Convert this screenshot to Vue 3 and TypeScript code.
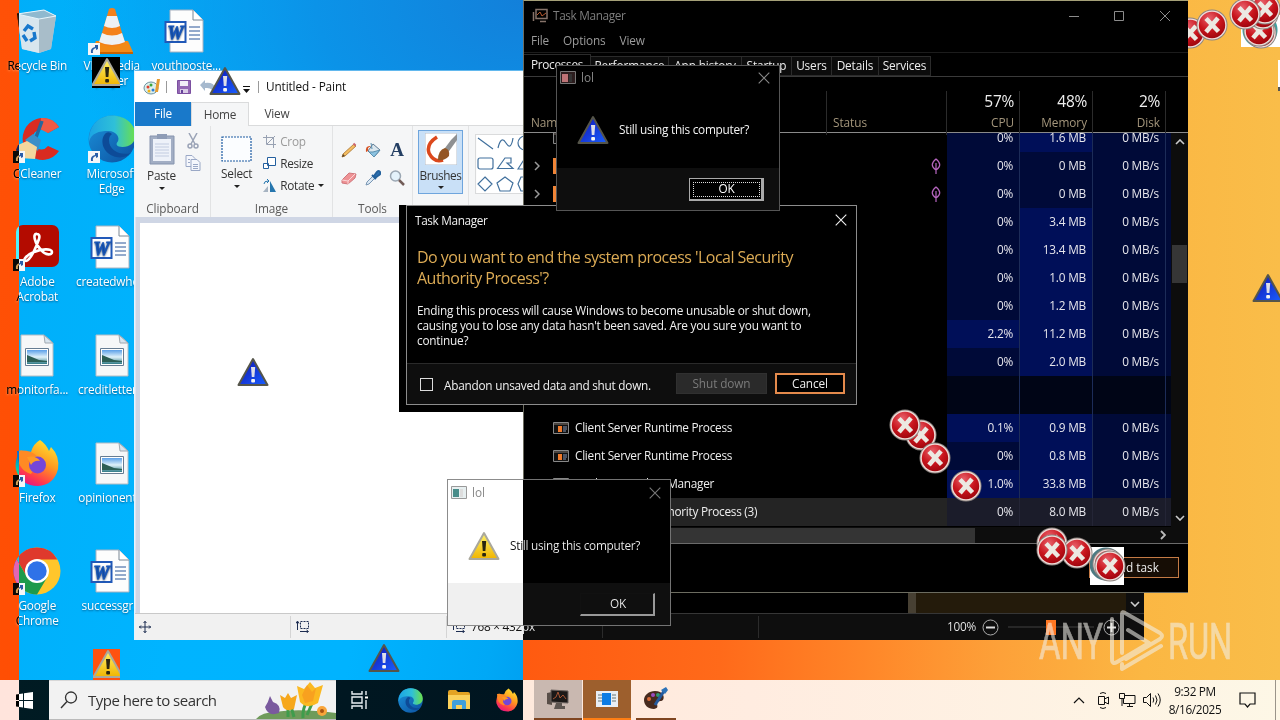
<script setup lang="ts">
interface Shortcut { icon: string; lines: string[]; link?: boolean }
interface Proc { name?: string; glyph?: string; chevron?: boolean; leaf?: boolean; cpu: string; mem: string; hotCpu?: boolean; hotMem?: boolean; selected?: boolean; gap?: boolean }
interface Pin { x: number; y: number }

const shortcuts: Shortcut[] = [
  { icon: 'bin', lines: ['Recycle Bin'] },
  { icon: 'ccleaner', lines: ['CCleaner'], link: true },
  { icon: 'acrobat', lines: ['Adobe', 'Acrobat'], link: true },
  { icon: 'picture', lines: ['monitorfa...'] },
  { icon: 'firefox', lines: ['Firefox'], link: true },
  { icon: 'chrome', lines: ['Google', 'Chrome'], link: true },
  { icon: 'vlc', lines: ['VLC media', 'player'], link: true },
  { icon: 'edge', lines: ['Microsoft', 'Edge'], link: true },
  { icon: 'word', lines: ['createdwhe...'] },
  { icon: 'picture', lines: ['creditletter...'] },
  { icon: 'picture', lines: ['opinionent...'] },
  { icon: 'word', lines: ['successgr...'] },
  { icon: 'word', lines: ['youthposte...'] },
]

const tabs = [
  { t: 'Processes', w: 67 }, { t: 'Performance', w: 78 }, { t: 'App history', w: 73 }, { t: 'Startup', w: 50 },
  { t: 'Users', w: 40 }, { t: 'Details', w: 47 }, { t: 'Services', w: 52 },
]

const procs: Proc[] = [
  { glyph: 'app', cpu: '0%', mem: '1.6 MB', hotMem: true },
  { glyph: 'tile', chevron: true, leaf: true, cpu: '0%', mem: '0 MB' },
  { glyph: 'tile', chevron: true, leaf: true, cpu: '0%', mem: '0 MB' },
  { cpu: '0%', mem: '3.4 MB', hotMem: true },
  { cpu: '0%', mem: '13.4 MB', hotMem: true },
  { cpu: '0%', mem: '1.0 MB', hotMem: true },
  { cpu: '0%', mem: '1.2 MB', hotMem: true },
  { cpu: '2.2%', mem: '11.2 MB', hotCpu: true, hotMem: true },
  { cpu: '0%', mem: '2.0 MB', hotMem: true },
  { name: 'Windows processes (95)', cpu: '', mem: '', gap: true },
  { name: 'Client Server Runtime Process', glyph: 'app', cpu: '0.1%', mem: '0.9 MB', hotCpu: true, hotMem: true },
  { name: 'Client Server Runtime Process', glyph: 'app', cpu: '0%', mem: '0.8 MB', hotMem: true },
  { name: 'Desktop Window Manager', glyph: 'app', cpu: '1.0%', mem: '33.8 MB', hotCpu: true, hotMem: true },
  { name: 'Local Security Authority Process (3)', glyph: 'app', cpu: '0%', mem: '8.0 MB', selected: true },
]

const errors: Pin[] = [
  { x: 921, y: 435 }, { x: 905, y: 425 }, { x: 935, y: 458 }, { x: 966, y: 486 },
  { x: 1052, y: 543 }, { x: 1077, y: 553 }, { x: 1052, y: 550 }, { x: 1108, y: 564 }, { x: 1110, y: 566 },
]
const cornerErrors: Pin[] = [
  { x: 2, y: 33 }, { x: 24, y: 25 }, { x: 73, y: 33 }, { x: 71, y: 31 }, { x: 75, y: 14 }, { x: 77, y: 9 }, { x: 57, y: 14 },
]
const blueWarnings: Pin[] = [{ x: 225, y: 81 }, { x: 253, y: 372 }, { x: 384, y: 658 }, { x: 1268, y: 288 }]
</script>

<template>
  <div class="screen">
    <svg class="defs" width="0" height="0">
      <defs>
        <linearGradient id="gYellow" x1="0" y1="0" x2="0" y2="1"><stop offset="0" stop-color="#fff36a" /><stop offset="1" stop-color="#f0b400" /></linearGradient>
        <linearGradient id="gBlue" x1="0" y1="0" x2="1" y2="1"><stop offset="0" stop-color="#1010b0" /><stop offset="1" stop-color="#1a60ff" /></linearGradient>
        <radialGradient id="gRed" cx=".4" cy=".25" r=".9"><stop offset="0" stop-color="#e8606a" /><stop offset=".5" stop-color="#c8141c" /><stop offset="1" stop-color="#8e0008" /></radialGradient>
        <linearGradient id="gEdgeA" x1="0" y1="0" x2="1" y2="0"><stop offset="0" stop-color="#1ba4e4" /><stop offset=".55" stop-color="#2fc0d8" /><stop offset="1" stop-color="#6be04a" /></linearGradient>
        <linearGradient id="gEdgeB" x1="0" y1="0" x2="1" y2="1"><stop offset="0" stop-color="#1b93dc" /><stop offset="1" stop-color="#0c4f9e" /></linearGradient>
        <linearGradient id="gFox" x1=".8" y1="0" x2=".3" y2="1"><stop offset="0" stop-color="#ffe733" /><stop offset=".45" stop-color="#ff9a1f" /><stop offset=".8" stop-color="#ff3a4c" /><stop offset="1" stop-color="#e31587" /></linearGradient>
        <linearGradient id="gPhoto" x1="0" y1="0" x2="0" y2="1"><stop offset="0" stop-color="#5a9fe8" /><stop offset=".5" stop-color="#e0f2fa" /><stop offset="1" stop-color="#2f7a86" /></linearGradient>
      </defs>
      <symbol id="warn" viewBox="0 0 32 30"><path d="M16 2 30.500 28h-29z" fill="url(#gYellow)" stroke="#aaa89c" stroke-width="2" stroke-linejoin="round" /><path d="M14 10h4.200l-.8 10h-2.600z" fill="#2a2510" /><rect x="14.200" y="22" width="3.800" height="3.600" rx="1" fill="#2a2510" /></symbol>
      <symbol id="bwarn" viewBox="0 0 32 30"><path d="M16 2 30.500 28h-29z" fill="url(#gBlue)" stroke="#55554a" stroke-width="2" stroke-linejoin="round" /><path d="M14 10h4.200l-.8 10h-2.600z" fill="#dedee8" /><rect x="14.200" y="22" width="3.800" height="3.600" rx="1" fill="#f4f4f4" /></symbol>
      <symbol id="error" viewBox="0 0 32 32"><circle cx="16" cy="16" r="15.500" fill="#8b8480" /><circle cx="16" cy="16" r="14.600" fill="#f0dcd8" /><circle cx="16" cy="16" r="13.200" fill="url(#gRed)" /><path d="m10 9.500 12.500 13M22 9 10 23" stroke="#ece9e2" stroke-width="4.600" /></symbol>
      <symbol id="bin" viewBox="0 0 48 48"><path d="M4 7 31 3l12 6-5 33-12 4-17-4z" fill="#bfdcec" opacity=".85" /><path d="m4 7 22 5v34L9 42z" fill="#d8e6ee" /><path d="m26 12 17-3-5 33-12 4z" fill="#a8bdc9" /><path d="M4 7 31 3l12 6-17 3z" fill="#8fb9cf" stroke="#e8f5fb" /><g fill="none" stroke="#1878cc" stroke-width="3.400"><path d="m11 24 4-5 5 3M21 25l1 6-5 3M14 34l-4-6" /></g></symbol>
      <symbol id="vlc" viewBox="0 0 48 48"><path d="M8 34h32l5 11H3z" fill="#f28a16" /><path d="M3 45h42v2H3z" fill="#c96200" /><path d="M21 2q3-2 6 0l10 34q-13 7-26 0z" fill="#f4811a" /><path d="m19 9h10l3 10q-8 4-16 0zM14 26q10 5 20 0l3 9q-13 6-26 0z" fill="#eef1f4" /></symbol>
      <symbol id="word" viewBox="3 0 48 48"><path d="M11 3h23l10 10v32H11z" fill="#fdfdfd" stroke="#a8b2c0" /><path d="M34 3v10h10" fill="#fff" stroke="#7b8794" /><path d="M30 20h11M30 24h11M30 28h11M30 32h11" stroke="#2b579a" /><path d="M6.500 15h20v20h-20z" fill="#fff" stroke="#2159b8" stroke-width="2" /><text x="8.500" y="31.500" font-family="Liberation Serif, serif" font-size="18" font-weight="700" font-style="italic" fill="#1a57ba" stroke="#1a57ba">W</text></symbol>
      <symbol id="picture" viewBox="1 0 48 48"><path d="M9 4h23l9 8v33H9z" fill="#f6f7f8" stroke="#b4bcc4" /><path d="m32 4 1 8h8z" fill="#d8e4ee" stroke="#a0a8b0" /><path d="M13.500 17.500h23v17h-23z" fill="#fff" stroke="#667c92" /><path d="M15 19h20v14H15z" fill="url(#gPhoto)" /><path d="m15 24 12 5 8 1v1H15z" fill="#2c5e55" /></symbol>
      <symbol id="ccleaner" viewBox="0 0 48 48"><path d="M46 12A20 21 0 1 0 46 36l-11-5a9 10 0 1 1 0-13z" fill="#d92b21" /><path d="M28 3a20 21 0 0 1 18 9l-11 6-8-4z" fill="#ef5a45" /><path d="m29 6-7 19" stroke="#25679d" stroke-width="3.500" /><path d="m12 25 8-6 8 6-3 11z" fill="#3b8fc8" /><path d="m5 30 9-4 10 6-2 12-15-1-4-8z" fill="#f3d79e" /></symbol>
      <symbol id="edge" viewBox="0 0 48 48"><circle cx="24" cy="24" r="23.500" fill="url(#gEdgeB)" /><path d="M1 22C3 8 13 .5 24 .5 38 .5 47.500 10 47.500 20c0 8-6 12-13 12-6 0-7-3-5-5 3-4-1-11-9-11C11 16 3 18 1 27z" fill="url(#gEdgeA)" /><path d="M18 18c-6 5-5 18 7 23 7 3 14 1 18-3-10 3-22-2-22-13q0-4 3-6-3-3-6-1z" fill="#0d4b98" /></symbol>
      <symbol id="acrobat" viewBox="0 0 48 48"><rect x="3" y="2" width="43" height="42" rx="7" fill="#b30b00" /><g fill="none" stroke="#fff" stroke-width="2.600"><path d="M24 11c-5-1-2 10 4 16 5 6 11 5 11 2 0-4-11-3-18 0-8 3-12 9-8 9 5-1 11-16 13-22 1-3 0-5-2-5z" /></g></symbol>
      <symbol id="firefox" viewBox="0 0 48 48"><path d="M27 1q6 4 9 11l2-4q9 9 7 22-4 16-20 17Q8 47 3 31 1 20 8 11l3 4q4-3 7-2 2-8 9-12z" fill="url(#gFox)" /><path d="M4 12q12-2 20 5-8 1-9 6 9-1 14 2-8 4-11 10Q4 31 4 12z" fill="#ff8a24" /><circle cx="24.500" cy="26" r="8.500" fill="#7546d8" /><path d="M14 18q9-2 13 4-6-1-9 4z" fill="#ff9a24" /></symbol>
      <symbol id="chrome" viewBox="0 0 48 48"><circle cx="24" cy="24" r="23.500" fill="#ffc62b" /><path d="M24 24 24 12.500H44.400A23.500 23.500 0 0 0 3.600 12.300L14 30z" fill="#df392d" /><path d="M3.600 12.300A23.500 23.500 0 0 0 24 47.500L34.400 30 24 24 14 30z" fill="#1c9a4c" /><circle cx="24" cy="24" r="12" fill="#fff" /><circle cx="24" cy="24" r="9.700" fill="#2f72e8" /></symbol>
      <symbol id="link" viewBox="0 0 12 12"><path d="M0 0h12v12H0z" fill="#f4f6f8" /><path d="M3 10q-1-5 4-6V2h3v4L8 7V5Q4 6 5 10z" fill="#2a5ea8" /></symbol>
      <symbol id="sizer" viewBox="0 0 14 12"><path d="M4.500.500h8v7h-8z" fill="none" stroke="#1c2c50" stroke-dasharray="2 1" /><path d="M1.500 9V1M0 2.500 1.500 0 3 2.500M4 10.500h8M10.500 9l2 1.500-2 1.500" fill="none" stroke="#1c2c50" /></symbol>
      <symbol id="win" viewBox="0 0 16 12"><path d="M.5.500h15v11H.5z" fill="#111" stroke="#888" /><path d="M1 1h14v2H1z" fill="#4a4440" /><path d="M5 4h4v6H5z" fill="#f07a2a" /><path d="M10 5h4M10 7h4M10 9h3" stroke="#8a99b8" /></symbol>
      <symbol id="chev" viewBox="0 0 10 6"><path d="m1 5 4-4 4 4" fill="none" stroke="currentColor" stroke-width="1.600" /></symbol>
      <symbol id="ex" viewBox="0 0 12 12"><path d="m.7.700 10.600 10.600m0-10.600L.7 11.300" stroke="currentColor" stroke-width="1.100" /></symbol>
    </svg>

    <div class="wall-blue"></div>
    <div class="wall-orange"></div>

    <div class="icons">
      <div v-for="(s, i) in shortcuts" :key="i" class="shortcut">
        <div class="pic">
          <svg width="48" height="48"><use :href="'#' + s.icon" /></svg>
          <svg v-if="s.link" class="link" width="12" height="12"><use href="#link" /></svg>
        </div>
        <span v-for="l in s.lines" :key="l">{{ l }}</span>
      </div>
    </div>

    <footer class="taskbar">
      <div class="start"><svg width="17" height="17" viewBox="0 0 17 17"><path d="M0 2.500 7 1.500V8H0zM8 1.300 17 0v8H8zM0 9h7v6.500l-7-1zM8 9h9v8l-9-1.300z" fill="#fff" /></svg></div>
      <div class="search">
        <svg width="18" height="18" viewBox="0 0 18 18"><circle cx="11" cy="6.500" r="5.500" fill="none" stroke="#333" stroke-width="1.300" /><path d="m7 10.500-6 6.500" stroke="#333" stroke-width="1.400" /></svg>
        <span>Type here to search</span>
        <svg class="flowers" width="80" height="38" viewBox="0 0 80 38">
          <path d="M0 38q6-7 20-7 22-4 60 1v6z" fill="#6f9b5a" /><path d="M14 15q-2 7-5 11 3 10 14 6 3-8-6-11z" fill="#7a5a9e" />
          <path d="M32 22v14M38 36 34 22M52 18q-6 10-5 19M58 18l-7 16" stroke="#3f9c4c" stroke-width="3" fill="none" />
          <path d="m24 14 5 3 3-5 3 5 6-3-3 14q-8 3-11-2z" fill="#f6a71c" /><path d="m41 5 7 3 6-7 5 6 8-3-5 18q-11 7-18-1z" fill="#fbb921" /><path d="m46 14 5-10 5 7 4-4-3 13-8 2z" fill="#f58a1d" opacity=".5" />
          <circle cx="66" cy="30" r="5" fill="#f9a53a" /><circle cx="66" cy="30" r="2" fill="#a95310" />
        </svg>
      </div>
      <div class="pinned">
        <svg width="18" height="18" viewBox="0 0 18 18" fill="none" stroke="#e8f0f4" stroke-width="1.400"><path d="M1 0v3h10V0M1 6h10v6H1zM1 18v-3h10v3M15 0v4M15 9v9" /><path d="M14 5.500h3v2h-3z" fill="#fff" stroke="none" /></svg>
        <svg width="25" height="25"><use href="#edge" /></svg>
        <svg width="22" height="20" viewBox="0 0 22 20"><path d="M0 2q0-2 2-2h6l2 2h10q2 0 2 2v15H0z" fill="#e3a323" /><path d="M0 5h22v14H0z" fill="#fbd15b" /><path d="M4 12q0-2 2-2h10q2 0 2 2v7h-4v-4H8v4H4z" fill="#3f9fdc" /></svg>
        <svg width="24" height="24"><use href="#firefox" /></svg>
      </div>
      <div class="open">
        <div class="task shade"><svg width="24" height="22" viewBox="0 0 24 22"><path d="m1 5 5-1v13l-5-1z" fill="#594e48" /><path d="m5 2 17 1v12l-17-1z" fill="#1c1918" stroke="#6a625e" /><path d="m7 11 3-2 2-5 2 6 3-3 3 4" fill="none" stroke="#a65534" /><path d="M10 15h6v3h3v3H8z" fill="#5d5550" /></svg></div>
        <div class="task hot"><svg width="22" height="16" viewBox="0 0 22 16"><path d="M0 0h22v16H0z" fill="#e8eef5" /><path d="M2 4h4M2 7h4M2 10h4M16 4h4M16 7h4M16 10h4" stroke="#677" /><rect x="6" y="2" width="9" height="12" fill="#0b7be4" /></svg></div>
        <div class="task plain"><svg width="24" height="24" viewBox="0 0 24 24"><path d="M11 4c8 0 10 6 8 9-2 2-5 0-6 3 0 3 2 5-3 6C4 22 0 18 0 13 0 8 5 4 11 4z" fill="#472a1e" /><circle cx="5" cy="12" r="2" fill="#d86a38" /><circle cx="9" cy="8" r="2" fill="#9a4cc0" /><circle cx="14" cy="8" r="2" fill="#2d9a72" /><path d="M11 18 20 4" stroke="#245a9e" stroke-width="3" /><path d="m17 3 5-3 2 3-3 4z" fill="#2c72b8" /></svg></div>
      </div>
      <div class="tray">
        <svg class="up" width="12" height="8" viewBox="0 0 12 8"><path d="m1 7 5-5 5 5" fill="none" stroke="#111" stroke-width="1.200" /></svg>
        <svg width="13" height="17" viewBox="0 0 13 17" fill="none" stroke="#111"><path d="M1.500 4.500h6v8h-6zM7.500 7l4-2v7l-4-2M3 1.500q3-2 6 0M3 15.500q3 2 6 0" /></svg>
        <svg width="17" height="15" viewBox="0 0 17 15" fill="none" stroke="#111"><path d="M5 2.500h11v8H4.500V6M8 13.500h6M10.500 11v3M.5.500h5v5h-5z" /><path d="M3 6v7" /></svg>
        <svg width="18" height="16" viewBox="0 0 18 16" fill="none" stroke="#111"><path d="M.5 5.500h3l4-4v13l-4-4h-3zM10 5.500q1.500 2.500 0 5M12.500 3.500q3 4.500 0 9M15 1.500q4.500 6.500 0 13" /></svg>
        <div class="clock"><span>9:32 PM</span><span>8/16/2025</span></div>
        <svg width="17" height="16" viewBox="0 0 17 16" fill="none" stroke="#111" stroke-width="1.200"><path d="M1 1h15v11h-5l-2.500 3L6 12H1z" /></svg>
      </div>
    </footer>
    <div class="flip edge-strip"></div>

    <section class="paint">
      <div class="ptitle">
        <svg width="18" height="18" viewBox="0 0 18 18"><ellipse cx="8" cy="10" rx="7" ry="6" fill="#dcefed" stroke="#6d93a0" /><circle cx="5" cy="9" r="1.500" fill="#e0402c" /><circle cx="8" cy="7" r="1.500" fill="#3ba53c" /><circle cx="6" cy="13" r="1.500" fill="#f2b313" /><circle cx="10" cy="12" r="1.500" fill="#2c7dd4" /><path d="m12 14 2-13h3l-2 13z" fill="#e59c31" /></svg>
        <i></i>
        <svg class="floppy" width="14" height="14" viewBox="0 0 14 14"><path d="M.5.500h13v13H.5z" fill="#9468b4" stroke="#7b4fa0" /><path d="M3 1h8v5H3z" fill="#f2eef7" /><path d="M3 9h8v4H3z" fill="#d9cbe6" /><path d="M4 10h2v3H4z" fill="#65429a" /></svg>
        <svg width="16" height="14" viewBox="0 0 16 14"><path d="m0 5 5-5v3q9-1 10 5v6h-3q2-7-7-6v3z" fill="#a6b9ce" /></svg>
        <svg class="qmenu" width="7" height="7" viewBox="0 0 7 7"><path d="M0 0h7v1H0zM0 3h7L3.500 7z" fill="#111" /></svg>
        <i></i>
        <span>Untitled - Paint</span>
      </div>
      <nav class="ptabs"><b>File</b><b class="on">Home</b><b>View</b></nav>
      <div class="ribbon">
        <div class="group clip">
          <div class="body">
            <div class="big"><svg width="26" height="32" viewBox="0 0 26 32"><path d="M1 3h24v28H1z" fill="#a2aec4" stroke="#8694ae" /><path d="M4 6h18v22H4z" fill="#eef2f9" /><path d="M8 1h10v5H8z" fill="#8e9cb6" /><path d="M6 11h14M6 14h14M6 17h14M6 20h14M6 23h14" stroke="#c2cce0" /></svg><span>Paste</span><em></em></div>
            <div class="minis"><svg width="12" height="16" viewBox="0 0 12 16" fill="none" stroke="#9aa3b6" stroke-width="1.500"><path d="m2 0 6 11M10 0 4 11" /><circle cx="3" cy="13" r="2" /><circle cx="9" cy="13" r="2" /></svg><svg width="16" height="16" viewBox="0 0 16 16" fill="#f5f7fc" stroke="#9aa8c6"><path d="M1 .5h6l3 3v8H1z" /><path d="M6 4.500h6l3 3v8H6z" /><path d="M8 9.500h5M8 11.500h5M8 13.500h5M3 4.500h2M3 7.500h2" /></svg></div>
          </div><label>Clipboard</label>
        </div>
        <div class="group img">
          <div class="body">
            <div class="big"><svg width="31" height="26" viewBox="0 0 31 26"><path d="M1 1h29v24H1z" fill="#fbfdff" stroke="#1c5aa2" stroke-width="1.200" stroke-dasharray="2 1" /></svg><span class="low">Select</span><em></em></div>
            <div class="cmds">
              <div class="off"><svg width="13" height="13" viewBox="0 0 13 13" fill="none" stroke="#98a1b2"><path d="M3.500 0v9.500H13M0 2.500h10.500V13M4 9l8-8" /></svg>Crop</div>
              <div><svg width="13" height="13" viewBox="0 0 13 13" fill="#fff" stroke="#235f9e"><path d="M4.500.500h8v8h-8zM.500 6.500h5v5h-5z" /></svg>Resize</div>
              <div><svg width="13" height="13" viewBox="0 0 13 13"><path d="M7 2v11h6z" fill="#2676ae" /><path d="M5 7v6H0z" fill="#a7b4c2" /><path d="M1 5q0-3 4-3M4 0l2 2-2 2" fill="none" stroke="#2676ae" /></svg>Rotate<em></em></div>
            </div>
          </div><label>Image</label>
        </div>
        <div class="group tools">
          <div class="body toolgrid">
            <svg width="16" height="16" viewBox="0 0 16 16"><path d="m1 15 1-3L13 2l2 2L4 14z" fill="#f4bd61" stroke="#a7712c" stroke-width=".8" /><path d="m1 15 1-3 2 2z" fill="#594228" /><path d="m12.500 1.500 2 2" stroke="#cc6570" stroke-width="2" /></svg>
            <svg width="16" height="16" viewBox="0 0 16 16"><path d="m8 2 7 6-6 7-6-6z" fill="#dbe7ee" stroke="#607c94" /><path d="m7 7-1-6M8 10l7-2-6 7-5-5z" stroke="#5b8fae" fill="#8cc3e1" /><path d="M6 4Q0 3 1 10q3-1 2-4z" fill="#d55122" /></svg>
            <span class="aa">A</span>
            <svg width="16" height="16" viewBox="0 0 16 16"><path d="m1 10 7-7 7 1-1 4-7 6-6-1z" fill="#ee9295" stroke="#d0777c" /><path d="m1 10 6 1 7-7M7 11v3" fill="none" stroke="#fbd5d6" /></svg>
            <svg width="16" height="16" viewBox="0 0 16 16"><path d="m1 15 1-3 6-6 2 2-6 6z" fill="#dbe8f3" stroke="#7996b4" /><path d="m7 5 4 4M9 6l3-4q2-2 3 0t-1 3l-4 3z" stroke="#24629d" stroke-width="2" fill="#2e72b4" /></svg>
            <svg width="16" height="16" viewBox="0 0 16 16"><circle cx="6.500" cy="6" r="5" fill="#e4f2fb" stroke="#9ba7b3" stroke-width="1.500" /><path d="m10 10 5 5" stroke="#725d58" stroke-width="2.500" /></svg>
          </div><label>Tools</label>
        </div>
        <div class="group brushes">
          <div class="brush"><svg width="32" height="32" viewBox="0 0 32 32"><path d="M0 0h32v32H0z" fill="#fff" stroke="#b7bec8" /><path d="M12 4Q1 11 4 20q5 10 14 7" fill="none" stroke="#dc481c" stroke-width="3.500" /><path d="m17 19 9-12 6-6v6l-10 14z" fill="#8e9092" /><path d="M13 27q0-10 7-12 5 1 4 8-4 5-11 4z" fill="#935624" /></svg><span>Brushes</span><em></em></div>
        </div>
        <div class="group shapes">
          <svg width="66" height="60" viewBox="0 0 66 60" fill="none" stroke="#41709d" stroke-width="1.200"><path d="M.5.500h65v59H.5z" fill="#fff" stroke="#dadbdc" /><path d="M3 4 18 15M23 14q3-13 8-5t7-5" /><circle cx="50" cy="9" r="7" /><rect x="3" y="24" width="15" height="11" rx="2" /><path d="M22.500 34.500 30 24h6v5h-4l6 5.500zM43 35l7-11 7 11zM10 43l7 7-7 7-7-7zM30 43l8 6-3 8H25l-3-8zM46 43h8l4 7-4 7h-8l-3-7z" /></svg>
        </div>
      </div>
      <div class="canvas-area"><div class="canvas"></div><div class="hbar"><div></div><svg width="10" height="6"><use href="#chev" /></svg></div></div>
      <div class="pstatus">
        <div class="c1"><svg width="12" height="12" viewBox="0 0 12 12"><path d="M6 0v12M0 6h12M4.500 2 6 .5 7.500 2M4.500 10 6 11.500 7.500 10M2 4.500.5 6 2 7.500M10 4.500 11.500 6 10 7.500" fill="none" stroke="#1c2c50" /></svg></div>
        <div class="c2"><svg width="14" height="12"><use href="#sizer" /></svg></div>
        <div class="c3"><svg width="14" height="12"><use href="#sizer" /></svg><span>768 × 432px</span></div>
        <div class="c4"></div>
        <div class="zoom"><span>100%</span><svg width="17" height="17" viewBox="0 0 17 17" fill="none" stroke="#222"><circle cx="8.500" cy="8.500" r="7.500" stroke="#555" /><path d="M4 8.500h9" stroke-width="2" /></svg><div class="track"><i></i></div><svg width="17" height="17" viewBox="0 0 17 17" fill="none" stroke="#222"><circle cx="8.500" cy="8.500" r="7.500" stroke="#555" /><path d="M4 8.500h9M8.500 4v9" stroke-width="2" /></svg></div>
      </div>
      <div class="flip right389"></div>
    </section>

    <section class="tm">
      <div class="tm-title">
        <svg width="16" height="15" viewBox="0 0 16 15" fill="none"><path d="M4 1.500h11v9H4zM8 13.500h6M1.500 4v9" stroke="#86736a" stroke-width="1.500" /><path d="m5 7 3-3 2 4 4-3" stroke="#b9582e" /></svg>
        <span>Task Manager</span>
        <svg class="cap" width="103" height="12" viewBox="0 0 103 12" fill="none" stroke="#8c8c8c"><path d="M1 6.500h10M46.500 1.500h9v9h-9zM92 1l10 10m0-10L92 11" /></svg>
      </div>
      <div class="tm-menu"><span>File</span><span>Options</span><span>View</span></div>
      <div class="tm-tabs"><div v-for="(t, i) in tabs" :key="t.t" :class="{ on: i === 0 }" :style="{ width: t.w + 'px' }">{{ t.t }}</div></div>
      <div class="tm-head grid">
        <div>Name</div><div>Status</div>
        <div class="n"><b>57%</b>CPU</div><div class="n"><b>48%</b>Memory</div><div class="n"><b>2%</b>Disk</div><div></div>
      </div>
      <div class="tm-main">
        <div class="rows">
          <div v-for="(p, i) in procs" :key="i" class="row grid" :class="{ gap: p.gap, sel: p.selected }">
            <div class="nm">
              <svg v-if="p.chevron" class="go" width="6" height="10" viewBox="0 0 6 10"><path d="m1 1 4 4-4 4" fill="none" stroke="#999" stroke-width="1.500" /></svg>
              <svg v-if="p.glyph === 'app'" class="ic" width="16" height="12"><use href="#win" /></svg>
              <i v-if="p.glyph === 'tile'" class="ic tile"></i>
              <span>{{ p.name }}</span>
            </div>
            <div class="st"><svg v-if="p.leaf" width="10" height="16" viewBox="0 0 10 16" fill="none" stroke="#b766c0" stroke-width="1.200"><path d="M5 1Q12.500 7 5 12-2.500 7 5 1zM5 5v11" /></svg></div>
            <div class="n" :class="{ hot: p.hotCpu }">{{ p.cpu }}</div>
            <div class="n" :class="{ hot: p.hotMem }">{{ p.mem }}</div>
            <div class="n">{{ p.gap ? '' : '0 MB/s' }}</div>
            <div class="tail"></div>
          </div>
        </div>
        <div class="vbar"><svg width="10" height="6"><use href="#chev" /></svg><i></i><svg class="down" width="10" height="6"><use href="#chev" /></svg></div>
      </div>
      <div class="tm-h"><i></i><svg width="6" height="10" viewBox="0 0 6 10"><path d="m1 1 4 4-4 4" fill="none" stroke="#bbb" stroke-width="1.800" /></svg></div>
      <div class="tm-foot"><button>End task</button></div>
    </section>

    <div class="halo"></div>
    <section class="confirm">
      <header><span>Task Manager</span><svg width="12" height="12"><use href="#ex" /></svg></header>
      <h2>Do you want to end the system process 'Local Security<br>Authority Process'?</h2>
      <p>Ending this process will cause Windows to become unusable or shut down,<br>causing you to lose any data hasn't been saved. Are you sure you want to<br>continue?</p>
      <footer><i></i><span>Abandon unsaved data and shut down.</span><button class="dim">Shut down</button><button class="go">Cancel</button></footer>
    </section>

    <section class="lol dark">
      <header><svg width="16" height="13" viewBox="0 0 16 13"><path d="M.5.500h15v12H.5z" fill="#2c1d1e" stroke="#777" /><path d="M2 3h6v8H2z" fill="#bd7376" /><path d="M9 3h3v8H9z" fill="#333" /></svg><span>lol</span><svg class="x" width="12" height="12"><use href="#ex" /></svg></header>
      <div class="msg"><svg width="32" height="30"><use href="#bwarn" /></svg><span>Still using this computer?</span></div>
      <footer><button class="focus">OK</button></footer>
    </section>

    <section class="lol light">
      <header><svg width="16" height="13" viewBox="0 0 16 13"><path d="M.5.500h15v12H.5z" fill="#e7eff0" stroke="#999" /><path d="M2 3h6v8H2z" fill="#488c89" /><path d="M9 3h3v8H9z" fill="#ddd" /></svg><span>lol</span><svg class="x" width="12" height="12"><use href="#ex" /></svg></header>
      <div class="msg"><svg width="32" height="30"><use href="#warn" /></svg><span>Still using this computer?</span></div>
      <footer><button>OK</button></footer>
      <div class="flip right76"></div>
    </section>

    <div class="patch dark-patch"><svg width="32" height="30"><use href="#warn" /></svg></div>
    <div class="patch orange-patch"><svg width="32" height="30"><use href="#warn" /></svg></div>
    <svg v-for="(p, i) in blueWarnings" :key="'b' + i" class="pin" width="32" height="30" :style="{ left: p.x - 16 + 'px', top: p.y - 15 + 'px' }"><use href="#bwarn" /></svg>
    <div class="white-patch"></div>
    <svg v-for="(p, i) in errors" :key="'e' + i" class="pin" width="32" height="32" :style="{ left: p.x - 16 + 'px', top: p.y - 16 + 'px' }"><use href="#error" /></svg>
    <div class="corner">
      <div class="corner-patch"></div>
      <svg v-for="(p, i) in cornerErrors" :key="i" class="pin" width="32" height="32" :style="{ left: p.x - 16 + 'px', top: p.y - 16 + 'px' }"><use href="#error" /></svg>
      <div class="sliver"></div>
    </div>

    <svg class="mark" width="196" height="66" viewBox="0 0 196 66">
      <g fill="#f2efe8" stroke="#f2efe8" stroke-width=".7" font-family="Roboto, sans-serif" font-size="50" font-weight="400"><text x="2" y="51" textLength="64" lengthAdjust="spacingAndGlyphs">ANY</text><text x="131" y="51" textLength="64" lengthAdjust="spacingAndGlyphs">RUN</text></g>
      <path d="M85 45V6q0-3 3-1l35 20q4 3 0 6L89 51M75 11v40q0 6 5 3l32-19-21-13M85 61l39-23M85 56v5" fill="none" stroke="#f2efe8" stroke-width="4" stroke-linejoin="round" stroke-linecap="round" />
    </svg>
  </div>
</template>

<style>
body { margin: 0; overflow: hidden; }
</style>

<style scoped>
.screen { position: relative; width: 1280px; height: 720px; overflow: hidden; font: 11.8px/15px "Open Sans", "Noto Sans", sans-serif; letter-spacing: -0.22px; color: #111; background: #00b2fd; }
.screen * { box-sizing: border-box; }
svg { display: block; flex: none; }
.defs { position: absolute; }
button { font: inherit; letter-spacing: inherit; padding: 0; border-radius: 0; }
.flip { position: absolute; top: 0; bottom: 0; right: 0; backdrop-filter: invert(1); }
.wall-blue { position: absolute; inset: 0; background: radial-gradient(ellipse 460px 330px at 523px 0, #1380da 0, #0b93e8 45%, transparent 100%), linear-gradient(100deg, #00aef8 0, #00b4ff 20%, #00b3ff 33%, #00a8f6 43%, #009cee 48%); }
.wall-orange { position: absolute; left: 523px; right: 0; top: 0; bottom: 0; background: linear-gradient(90deg, #ff5a10 0, #ff6a1a 26%, #ff892a 47%, #fda139 63%, #fbb743 82%, #f9bd49 100%); }
.icons { position: absolute; left: 0; top: 0; display: grid; grid-auto-flow: column; grid-template-rows: repeat(6, 108px); grid-auto-columns: 74.5px; color: #fff; text-shadow: 0 1px 2px rgba(0, 40, 80, .6); }
.shortcut { display: flex; flex-direction: column; align-items: center; padding-top: 7px; white-space: nowrap; letter-spacing: -.18px; }
.pic { position: relative; margin-bottom: 3px; }
.link { position: absolute; left: 0; bottom: 0; }
.edge-strip { left: 0; right: auto; width: 19px; }

.taskbar { position: absolute; left: 0; right: 0; bottom: 0; height: 40px; display: flex; background: linear-gradient(90deg, #001b23 0, #001520 523px, #ffe9dc 523px, #ffece0 750px, #fdf7e6 1280px); }
.start { width: 49px; display: flex; align-items: center; padding-left: 16px; }
.search { width: 287px; background: #f2f2f2; border-top: 1px solid #d7d7d7; border-bottom: 1px solid #bbb; display: flex; align-items: center; padding-left: 11px; gap: 10px; font-size: 15px; letter-spacing: -0.5px; color: #333; white-space: nowrap; }
.flowers { margin-left: auto; align-self: flex-end; }
.pinned { width: 187px; display: flex; align-items: center; padding-left: 15px; gap: 25px; }
.pinned svg:first-child { margin-right: 4px; }
.open { display: flex; padding-left: 11px; }
.task { width: 48px; display: flex; justify-content: center; align-items: center; border-bottom: 2px solid #7f4520; margin-right: 1px; }
.shade { background: #c9b8b0; }
.hot { background: #9d5f2d; border-color: #ff7e14; }
.plain { width: 40px; margin-left: 4px; }
.tray { margin-left: auto; width: 212px; display: flex; align-items: center; padding-left: 9px; gap: 11px; border-right: 1px solid #9a948a; margin-right: 4px; }
.up { margin-right: 1px; }
.tray > svg:nth-child(2) { margin-right: -2px; }
.tray > svg:nth-child(3) { margin-right: -4px; }
.clock { display: flex; flex-direction: column; align-items: center; width: 52px; margin: 0 7px 0 -3px; line-height: 18px; letter-spacing: -0.35px; }

.paint { position: absolute; left: 134px; top: 70px; width: 1010px; height: 570px; background: #fff; border-left: 1px solid #e4f4ff; border-top: 1px solid #62b8ee; display: flex; flex-direction: column; }
.ptitle { height: 31px; display: flex; align-items: center; padding-left: 8px; flex: none; letter-spacing: -.12px; }
.ptitle i { width: 1px; height: 12px; background: #9a9a9a; margin: 0 10px 0 5px; }
.ptitle .floppy { margin-right: 9px; }
.ptitle .qmenu { margin: 5px 8px 0 27px; }
.ptitle .qmenu + i { margin-left: 0; margin-right: 7px; }
.ptabs { height: 24px; display: flex; border-bottom: 1px solid #dadbdc; flex: none; }
.ptabs b { font-weight: 400; width: 56px; line-height: 23px; text-align: center; color: #444; }
.ptabs b:first-child { background: #1979ca; color: #fff; height: 24px; }
.ptabs .on { width: 58px; height: 24px; background: #f5f6f7; border: 1px solid #dadbdc; border-bottom: 0; line-height: 22px; }
.ribbon { height: 91px; background: #f5f6f7; display: flex; color: #333; flex: none; }
.group { display: flex; flex-direction: column; border-right: 1px solid #e2e3e4; padding-top: 7px; }
.group .body { height: 68px; display: flex; }
.group label { text-align: center; color: #5a5a5a; letter-spacing: -.1px; }
.big { display: flex; flex-direction: column; align-items: center; }
.big svg { margin-bottom: 3px; }
.big .low { margin-top: 4px; }
em { width: 0; height: 0; border: 3px solid transparent; border-top: 3.500px solid #222; border-bottom: 0; margin-top: 4px; }
.clip { width: 76px; }
.clip .body { padding-left: 12px; gap: 6px; }
.minis { display: flex; flex-direction: column; align-items: center; gap: 6px; padding-left: 3px; }
.img { width: 122px; }
.img .body { padding-left: 10px; gap: 11px; }
.img .big { padding-top: 3px; }
.img .big svg { margin-bottom: 0; }
.cmds { margin-top: -2px; }
.cmds div { display: flex; align-items: center; gap: 4px; height: 22px; margin-top: -1px; margin-bottom: 1px; letter-spacing: -.3px; }
.cmds em { margin: 0; }
.cmds .off { color: #9a9a9a; }
.tools { width: 80px; }
.tools .toolgrid { display: grid; grid-template-columns: repeat(3, 24px); grid-template-rows: 28px 28px; justify-items: center; align-items: center; padding: 3px 0 0 4px; }
.aa { font: 700 19px/16px "Liberation Serif", serif; color: #243f63; }
.brushes { width: 56px; padding: 4px 5px 0 5px; }
.brush { height: 64px; width: 45px; background: #c9e0f7; border: 1px solid #6ea5dd; display: flex; flex-direction: column; align-items: center; padding-top: 2px; line-height: 20px; letter-spacing: -.4px; }
.brush em { margin-top: 1px; }
.shapes { padding-left: 6px; border: 0; padding-top: 8px; }
.canvas-area { flex: 1; background: #cfd6e5; padding: 6px 0 0 4px; position: relative; display: flex; flex-direction: column; border-left: 1px solid #dfe4f0; }
.canvas { flex: 1; background: #fff; width: 769px; }
.hbar { position: absolute; right: 0; bottom: 0; width: 236px; height: 21px; background: #dbe4f4; border-left: 8px solid #b8bfcc; display: flex; align-items: center; justify-content: flex-end; color: #333; }
.hbar div { width: 18px; height: 21px; background: #f1f1f1; margin-right: -18px; }
.hbar svg { transform: rotate(180deg); margin: 2px 4px 0 4px; }
.pstatus { height: 27px; background: #f1f1f1; border-top: 1px solid #c9c9c9; display: flex; align-items: center; flex: none; }
.pstatus > div { height: 22px; display: flex; align-items: center; border-right: 1px solid #d4d4d4; }
.pstatus span { margin-top: -1px; }
.c1 { width: 156px; padding-left: 4px; }
.c2 { width: 156px; padding-left: 5px; }
.c3 { width: 156px; padding-left: 5px; gap: 5px; letter-spacing: -.25px; }
.c4 { width: 156px; }
.pstatus .zoom { border: 0; padding-left: 188px; gap: 6px; }
.track { width: 86px; height: 2px; background: #d8d8d8; margin: 0 3px 0 3px; display: flex; justify-content: center; align-items: center; }
.track i { width: 10px; height: 15px; background: #0088dd; }
.right389 { left: 388px; }

.tm { position: absolute; left: 523px; top: 0; width: 665px; height: 593px; background: #000; border: solid #6c6c60; border-width: 1px 0 1px 1px; border-top-color: #a5a078; color: #eee; display: flex; flex-direction: column; }
.tm-title { height: 30px; display: flex; align-items: center; padding: 0 17px 1px 8px; gap: 5px; color: #7d7d7d; flex: none; letter-spacing: -.35px; }
.cap { margin-left: auto; }
.tm-menu { height: 21px; display: flex; gap: 14px; padding: 0 0 2px 7px; align-items: center; color: #9b9b9b; flex: none; letter-spacing: -.15px; }
.tm-tabs { height: 25px; display: flex; align-items: flex-end; border-bottom: 1px solid #3a3a3a; border-top: 1px solid #1c1c1c; flex: none; }
.tm-tabs div { height: 20px; background: #0c0c0c; border: 1px solid #2b2b2b; border-left: 0; line-height: 17px; text-align: center; white-space: nowrap; letter-spacing: -.12px; }
.tm-tabs .on { background: #000; height: 22px; border-bottom: 0; line-height: 18px; letter-spacing: -.3px; }
.grid { display: grid; grid-template-columns: 303px 120px 73px 73px 73px 5px; }
.tm-head { height: 56px; border-bottom: 1px solid #8a8a8a; padding-top: 14px; color: #a4967c; flex: none; }
.tm-head > div { border-right: 1px solid #2b2b2b; display: flex; flex-direction: column; justify-content: flex-end; padding: 0 0 6px 6px; letter-spacing: -.05px; line-height: 14px; }
.tm-head > div:first-child { padding-left: 7px; }
.tm-head > div:last-child { border: 0; }
.tm-head .n { align-items: flex-end; padding-right: 5px; }
.tm-head b { font-weight: 400; font-size: 15.500px; line-height: 20px; color: #eee; margin-bottom: 4px; letter-spacing: -.3px; }
.tm-main { height: 394px; display: flex; overflow: hidden; flex: none; }
.rows { width: 647px; margin-top: -9px; }
.row { height: 28px; }
.row .n { background: #000a38; border-right: 1px solid #1c2c58; text-align: right; padding-right: 6px; line-height: 26.500px; color: #e6e6ec; white-space: nowrap; letter-spacing: -.2px; }
.row .n.hot { background: #000f58; }
.row .tail { background: #000a38; }
.row.gap { height: 38px; }
.gap .n, .gap .tail { background: #000516; }
.row.sel { background: #242424; width: 647px; }
.sel .n, .sel .tail { background: #1b1c2a; border-color: #242536; }
.nm { display: flex; align-items: center; padding-left: 51px; white-space: nowrap; letter-spacing: -.27px; }
.nm span { margin-top: -1px; }
.gap .nm { padding-left: 7px; font-size: 15px; letter-spacing: -.1px; color: #b98b4a; }
.nm .go { margin-left: -41px; margin-right: 13px; }
.nm .ic { margin-left: -22px; margin-right: 6px; }
.nm .go + .ic { margin-left: 0; }
.nm .tile { width: 16px; height: 16px; background: #f08436; }
.st { display: flex; justify-content: flex-end; align-items: center; padding-right: 6px; }
.vbar { width: 17px; background: #0d0d0d; display: flex; flex-direction: column; align-items: center; padding-top: 6px; color: #ccc; }
.vbar i { width: 15px; height: 38px; background: #363636; margin-top: 100px; margin-bottom: 232px; flex: none; }
.down { transform: rotate(180deg); }
.tm-h { height: 17px; border-bottom: 1px solid #6a6a6a; background: #0d0d0d; display: flex; align-items: center; justify-content: space-between; padding-right: 22px; flex: none; }
.tm-h i { width: 451px; height: 15px; background: #343434; }
.tm-foot { flex: 1; display: flex; justify-content: flex-end; align-items: center; padding: 0 9px 1px 0; }
.tm-foot button { width: 90px; height: 21px; background: #160d05; border: 1px solid #c47a45; color: #eee; letter-spacing: 0; line-height: 18px; padding: 0 0 1px 3px; }

.halo { position: absolute; left: 399px; top: 205px; width: 124px; height: 207px; background: #000; }
.confirm { position: absolute; left: 406px; top: 205px; width: 451px; height: 200px; background: #000; border: 1px solid #8c8c8c; color: #f0f0f0; display: flex; flex-direction: column; }
.confirm header { height: 30px; display: flex; align-items: center; justify-content: space-between; padding: 0 9px 2px 8px; letter-spacing: -.35px; }
.confirm h2 { font-weight: 400; font-size: 16px; line-height: 21px; letter-spacing: -.52px; color: #dcab55; margin: 11px 10px 14px; white-space: nowrap; }
.confirm p { margin: 0 10px; line-height: 15px; white-space: nowrap; letter-spacing: -.23px; }
.confirm footer { margin-top: auto; height: 41px; background: #0e0e0e; border-top: 1px solid #2a2a2a; display: flex; align-items: center; padding: 0 11px 0 13px; }
.confirm footer i { width: 13px; height: 13px; border: 1px solid #ddd; margin-right: 11px; }
.confirm footer span { margin-top: 2px; letter-spacing: -.24px; }
.confirm button { height: 21px; width: 91px; background: #2a2a2a; border: 1px solid #303030; color: #7b7b7b; margin-left: auto; line-height: 17px; letter-spacing: -.1px; margin-bottom: 1px; padding-bottom: 1px; }
.confirm button.go { width: 70px; margin-left: 8px; background: #000; border: 2px solid #e48a4c; color: #eee; line-height: 15px; letter-spacing: -.1px; }

.lol { position: absolute; width: 224px; height: 146px; display: flex; flex-direction: column; border: 1px solid #6e6e6e; background: #fff; }
.dark { left: 556px; top: 65px; background: #000; color: #f4f4f4; border-color: #555; }
.light { left: 447px; top: 479px; height: 147px; border-color: #8c8c8c; }
.lol header { height: 24px; display: flex; align-items: center; padding: 0 9px 1px 3px; gap: 5px; color: #888; letter-spacing: 0; }
.light header { height: 26px; }
.lol header span { margin-top: -1px; }
.x { margin-left: auto; }
.msg { flex: 1; display: flex; align-items: center; padding: 2px 0 0 20px; gap: 10px; white-space: nowrap; letter-spacing: -.27px; }
.msg span { margin-top: -1px; }
.lol footer { height: 42px; background: #f0f0f0; display: flex; justify-content: flex-end; align-items: center; padding-right: 15px; }
.lol button { width: 75px; height: 23px; background: #f0f0f0; border: 1px solid #eee; border-right: 2px solid #666; border-bottom: 2px solid #666; padding-left: 2px; color: #111; }
.dark footer { background: #0e0e0e; }
.dark button { background: #000; color: #fff; border: 1px solid #aaa; border-right: 3px solid #aaa; border-bottom: 2px solid #aaa; outline: 1px dotted #ddd; outline-offset: -5px; }
.right76 { left: 75px; top: -1px; bottom: -1px; right: -1px; }

.pin { position: absolute; }
.patch { position: absolute; overflow: hidden; }
.dark-patch { left: 92px; top: 57px; width: 28px; height: 31px; background: #000; }
.orange-patch { left: 93px; top: 649px; width: 27px; height: 31px; background: #ff5210; }
.patch svg { margin-left: -1px; }
.white-patch { position: absolute; left: 1090px; top: 547px; width: 34px; height: 38px; background: radial-gradient(circle at 16px 17px, #4d7b83 16px, #fff 17px); }
.corner { position: absolute; left: 1188px; top: 0; width: 92px; height: 100px; overflow: hidden; }
.corner-patch { position: absolute; right: 0; top: 15px; width: 39px; height: 32px; background: radial-gradient(circle at 19px 15px, #3fa0a0 17px, #fff 18px); }
.sliver { position: absolute; right: 0; top: 60px; width: 2px; height: 31px; background: #fff; border-bottom: 4px solid #555; }
.mark { position: absolute; left: 1037px; top: 608px; opacity: .58; }
</style>
